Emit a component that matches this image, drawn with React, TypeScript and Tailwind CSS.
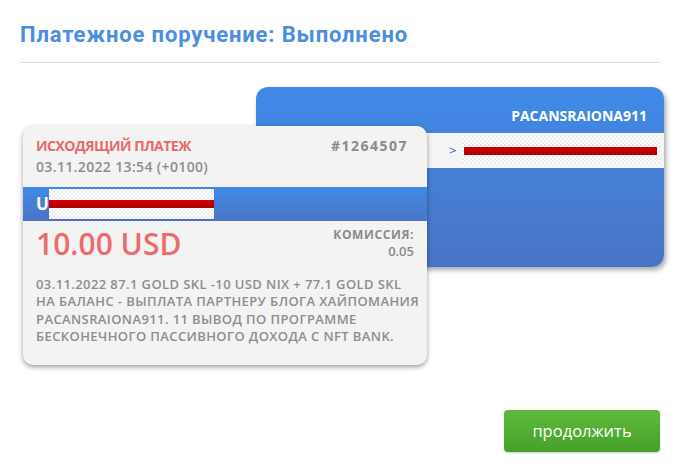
import React from "react";

const cardFont = { fontFamily: '"Open Sans", "Noto Sans", sans-serif' };

function Redact({ className, barClass }: { className: string; barClass?: string }) {
  return (
    <div
      className={`flex items-center bg-[repeating-conic-gradient(#e9e9e9_0_25%,#ffffff_0_50%)] bg-[length:4px_4px] ${className}`}
    >
      <div className={`h-[8px] flex-1 bg-gradient-to-b from-[#d40000] to-[#a80000] ${barClass ?? ""}`} />
    </div>
  );
}

export default function App() {
  return (
    <div className="w-[675px] h-[470px] bg-white pl-[20px] pr-[15px] pt-[21px]" style={cardFont}>
      <h1
        className="text-[22px] font-bold leading-[27px] text-[#4a8ee0] tracking-[0.85px]"
        style={{ fontFamily: '"Roboto", sans-serif' }}
      >
        Платежное поручение: Выполнено
      </h1>
      <div className="mt-[14px] h-px bg-[#dcdcdc]" />

      <div className="relative mt-[24px]">
        {/* back card */}
        <div className="ml-[236px] w-[408px] h-[180px] rounded-[12px] overflow-hidden bg-gradient-to-b from-[#3f8ae8] to-[#4a74c4] shadow-[2px_3px_5px_rgba(0,0,0,0.35)] flex flex-col">
          <div className="h-[46px] flex items-center justify-end pr-[17px] pt-[10px]">
            <span className="text-[14px] font-bold text-white">PACANSRAIONA911</span>
          </div>
          <div className="h-[35px] bg-[#f4f4f4] flex items-center pl-[193px] pr-[4px]">
            <span className="text-[#4a7fd0] text-[13px] font-semibold mr-[6px]">&gt;</span>
            <Redact className="flex-1 h-[29px]" barClass="ml-[2px] mr-[3px]" />
          </div>
        </div>

        {/* front card */}
        <div className="absolute left-[3px] top-[39px] w-[404px] h-[239px] rounded-[10px] bg-[#f3f3f3] shadow-[0_2px_5px_rgba(0,0,0,0.4)] overflow-hidden flex flex-col">
          <div className="px-[13px] pt-[9px] h-[61px]">
            <div className="flex justify-between items-center">
              <span className="text-[14px] font-bold text-[#ea6a6a] tracking-[-0.5px]">ИСХОДЯЩИЙ ПЛАТЕЖ</span>
              <span className="text-[14px] font-bold text-[#8a8a8a] tracking-[1.5px] mr-[6px]">#1264507</span>
            </div>
            <div className="text-[14px] font-semibold text-[#8d8d8d] mt-[1px] tracking-[0.35px] leading-[20px]">03.11.2022 13:54 (+0100)</div>
          </div>
          <div className="h-[34px] bg-gradient-to-b from-[#3f8ae8] to-[#4a74c4] flex items-center pl-[13px]">
            <span className="text-white text-[17px] font-bold">U</span>
            <Redact className="w-[165px] h-[30px]" />
          </div>
          <div className="flex justify-between px-[13px] pt-[2px]">
            <span className="text-[30px] font-semibold text-[#ee6b6b] leading-[42px]">10.00 USD</span>
            <div className="text-right pt-[5px]">
              <div className="text-[12px] font-bold text-[#8a8a8a] leading-[14px] tracking-[0.6px]">КОМИССИЯ:</div>
              <div className="text-[13px] font-semibold text-[#8a8a8a] leading-[19px]">0.05</div>
            </div>
          </div>
          <div className="px-[13px] mt-[11px] text-[13px] font-semibold text-[#8d8d8d] leading-[17.4px] tracking-[0.4px]">
            <div className="whitespace-nowrap">03.11.2022 87.1 GOLD SKL -10 USD NIX + 77.1 GOLD SKL</div>
            <div className="whitespace-nowrap">НА БАЛАНС - ВЫПЛАТА ПАРТНЕРУ БЛОГА ХАЙПОМАНИЯ</div>
            <div className="whitespace-nowrap">PACANSRAIONA911. 11 ВЫВОД ПО ПРОГРАММЕ</div>
            <div className="whitespace-nowrap">БЕСКОНЕЧНОГО ПАССИВНОГО ДОХОДА С NFT BANK.</div>
          </div>
        </div>
      </div>

      <div className="mt-[143px] flex justify-end">
        <button className="w-[156px] h-[42px] rounded-[4px] bg-gradient-to-b from-[#5fba3c] to-[#47a02a] text-white text-[16.5px] shadow-[0_1px_2px_rgba(0,0,0,0.2)]">
          продолжить
        </button>
      </div>
    </div>
  );
}
